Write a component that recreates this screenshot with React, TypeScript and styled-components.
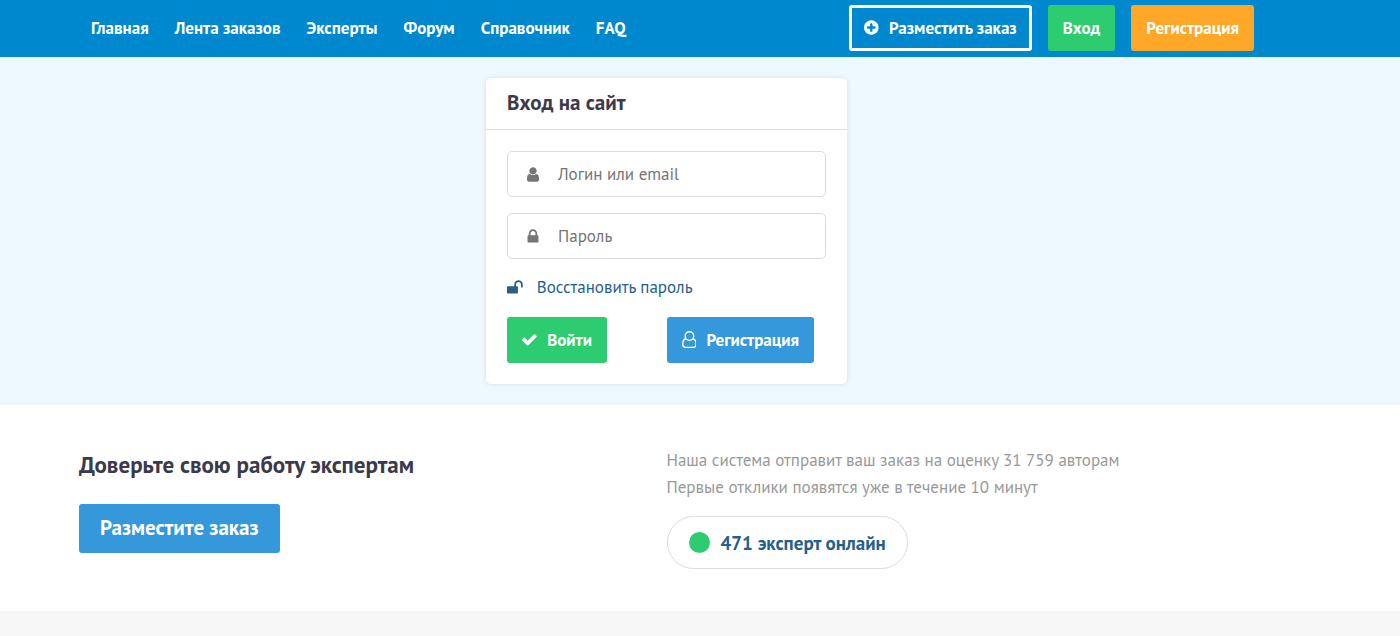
import React from "react";
import styled, { createGlobalStyle, css } from "styled-components";

const GlobalStyle = createGlobalStyle`
  *, *::before, *::after { box-sizing: border-box; }
  body {
    margin: 0;
    min-height: 100vh;
    background: #f7f7f7;
    color: #3a3a4a;
    font-family: "PT Sans", Lato, "Noto Sans", sans-serif;
    font-size: 17px;
    line-height: 24px;
  }
  h1, h2, p { margin: 0; }
  button, input { font: inherit; }
`;

/* Page bands share one centred column */
const Container = styled.div`
  width: 100%;
  max-width: 1175px;
  margin: 0 auto;
`;

const band = css`
  padding-left: 16px;
  padding-right: 83px;
`;

const Header = styled.header`
  ${band}
  background: #0088ce;
`;

const HeaderBar = styled(Container)`
  display: flex;
  flex-wrap: wrap;
  align-items: center;
  justify-content: space-between;
  min-height: 57px;
  padding-left: 12px;
  padding-bottom: 1px;
`;

const Nav = styled.nav`
  display: flex;
  flex-wrap: wrap;
  gap: 26px;
`;

const NavLink = styled.a`
  color: #fff;
  font-weight: 700;
  text-decoration: none;
`;

const Actions = styled.div`
  display: flex;
  gap: 16px;
`;

type Tone = "green" | "orange" | "blue" | "outline";
const tones: Record<Tone, string> = {
  green: "#2ecc71",
  orange: "#ffa726",
  blue: "#3498db",
  outline: "transparent",
};

const Button = styled.button<{ $tone: Tone; $large?: boolean }>`
  display: inline-flex;
  align-items: center;
  gap: 10px;
  height: ${({ $large }) => ($large ? 49 : 46)}px;
  padding: 0 ${({ $large }) => ($large ? 18 : 12)}px 1px;
  border: 3px solid ${({ $tone }) => ($tone === "outline" ? "#fff" : tones[$tone])};
  border-radius: 3px;
  background: ${({ $tone }) => tones[$tone]};
  color: #fff;
  font-size: ${({ $large }) => ($large ? 21 : 17)}px;
  font-weight: 700;
  white-space: nowrap;
  cursor: pointer;
`;

const Hero = styled.main`
  ${band}
  padding-top: 21px;
  padding-bottom: 21px;
  background: #eef9ff;
`;

const Card = styled.section`
  width: 100%;
  max-width: 361px;
  margin: 0 auto;
  border-radius: 5px;
  background: #fff;
  box-shadow: 0 0 5px rgba(0, 60, 90, 0.12);
`;

const CardTitle = styled.h1`
  padding: 12px 21px 13px;
  border-bottom: 1px solid #dde1e5;
  font-size: 21px;
  line-height: 26px;
`;

const Form = styled.form`
  display: flex;
  flex-direction: column;
  gap: 16px;
  padding: 21px;
`;

const Field = styled.label`
  display: flex;
  align-items: center;
  height: 46px;
  padding-left: 16px;
  border: 1px solid #dcdcdc;
  border-radius: 5px;
  color: #757575;
`;

const Input = styled.input`
  flex: 1;
  min-width: 0;
  height: 100%;
  padding: 0 16px;
  border: 0;
  outline: 0;
  background: transparent;
  color: #3a3a4a;
  &::placeholder { color: #757575; opacity: 1; }
`;

const RestoreLink = styled.a`
  display: flex;
  align-items: center;
  gap: 14px;
  padding-bottom: 2px;
  color: #265f8c;
  text-decoration: none;
`;

const FormActions = styled.div`
  display: grid;
  grid-template-columns: 1fr 1fr;
  justify-items: start;
`;

const Promo = styled.section`
  ${band}
  padding-top: 42px;
  padding-bottom: 42px;
  background: #fff;
`;

const PromoGrid = styled(Container)`
  display: grid;
  grid-template-columns: 1fr 1fr;
`;

const PromoTitle = styled.h2`
  padding: 2px 0 23px;
  font-size: 23px;
  line-height: 32px;
`;

const PromoText = styled.p`
  color: #999;
  line-height: 27px;
`;

const OnlineBadge = styled.a`
  display: inline-flex;
  align-items: center;
  gap: 11px;
  height: 53px;
  margin-top: 15px;
  padding: 0 21px;
  border: 1px solid #dcdcdc;
  border-radius: 27px;
  color: #265f8c;
  font-size: 19px;
  font-weight: 700;
  text-decoration: none;
  vertical-align: top;
`;

const OnlineDot = styled.span`
  width: 21px;
  height: 21px;
  border-radius: 50%;
  background: #2ecc71;
`;

const Svg = styled.svg<{ $boxed?: boolean }>`
  flex: none;
  width: ${({ $boxed }) => ($boxed ? "18px" : "auto")};
  height: 17px;
  fill: currentColor;
`;

/* Glyph outlines with the horizontal extent each one occupies */
const icons = {
  plus: { x: 128, w: 1536, d: "M1344 960v-128q0-26-19-45t-45-19h-256v-256q0-26-19-45t-45-19h-128q-26 0-45 19t-19 45v256h-256q-26 0-45 19t-19 45v128q0 26 19 45t45 19h256v256q0 26 19 45t45 19h128q26 0 45-19t19-45v-256h256q26 0 45-19t19-45zm320-64q0 209-103 385.5t-279.5 279.5-385.5 103-385.5-103-279.5-279.5-103-385.5 103-385.5 279.5-279.5 385.5-103 385.5 103 279.5 279.5 103 385.5z" },
  user: { x: 256, w: 1280, d: "M1536 1399q0 109-62.5 187t-150.5 78h-854q-88 0-150.5-78t-62.5-187q0-85 8.5-160.5t31.5-152 58.5-131 94-89 134.5-34.5q131 128 313 128t313-128q76 0 134.5 34.5t94 89 58.5 131 31.5 152 8.5 160.5zm-256-887q0 159-112.5 271.5t-271.5 112.5-271.5-112.5-112.5-271.5 112.5-271.5 271.5-112.5 271.5 112.5 112.5 271.5z" },
  lock: { x: 320, w: 1152, d: "M640 768h512v-192q0-106-75-181t-181-75-181 75-75 181v192zm832 96v576q0 40-28 68t-68 28h-960q-40 0-68-28t-28-68v-576q0-40 28-68t68-28h32v-192q0-184 132-316t316-132 316 132 132 316v192h32q40 0 68 28t28 68z" },
  unlock: { x: 64, w: 1664, d: "M1728 576v256q0 26-19 45t-45 19h-64q-26 0-45-19t-19-45v-256q0-106-75-181t-181-75-181 75-75 181v192h96q40 0 68 28t28 68v576q0 40-28 68t-68 28h-960q-40 0-68-28t-28-68v-576q0-40 28-68t68-28h672v-192q0-185 131.5-316.5t316.5-131.5 316.5 131.5 131.5 316.5z" },
  check: { x: 121, w: 1600, d: "M1671 566q0 40-28 68l-724 724-136 136q-28 28-68 28t-68-28l-136-136-362-362q-28-28-28-68t28-68l136-136q28-28 68-28t68 28l294 295 656-657q28-28 68-28t68 28l136 136q28 28 28 68z" },
};

function Icon({ name, boxed }: { name: keyof typeof icons; boxed?: boolean }) {
  const { x, w, d } = icons[name];
  return (
    <Svg $boxed={boxed} viewBox={`${x} 0 ${w} 1792`} aria-hidden="true">
      <path d={d} />
    </Svg>
  );
}

function UserOutline() {
  return (
    <Svg viewBox="1.2 0.2 15.6 17.8" aria-hidden="true">
      <g fill="none" stroke="currentColor" strokeWidth="1.4">
        <circle cx="9" cy="5.5" r="4.5" />
        <path d="M5.4 8.300C2.900 8.700 2 11 2 14.100c0 1.900 1.200 3.200 2.900 3.200h8.200c1.700 0 2.900-1.300 2.900-3.200 0-3.100-.9-5.400-3.400-5.800" />
      </g>
    </Svg>
  );
}

const navItems = ["Главная", "Лента заказов", "Эксперты", "Форум", "Справочник", "FAQ"];

export default function App() {
  return (
    <>
      <GlobalStyle />
      <Header>
        <HeaderBar>
          <Nav>
            {navItems.map((item) => (
              <NavLink key={item} href="#">{item}</NavLink>
            ))}
          </Nav>
          <Actions>
            <Button $tone="outline" type="button"><Icon name="plus" />Разместить заказ</Button>
            <Button $tone="green" type="button">Вход</Button>
            <Button $tone="orange" type="button">Регистрация</Button>
          </Actions>
        </HeaderBar>
      </Header>
      <Hero>
        <Card>
          <CardTitle>Вход на сайт</CardTitle>
          <Form onSubmit={(e) => e.preventDefault()}>
            <Field>
              <Icon name="user" boxed />
              <Input type="text" placeholder="Логин или email" aria-label="Логин или email" />
            </Field>
            <Field>
              <Icon name="lock" boxed />
              <Input type="password" placeholder="Пароль" aria-label="Пароль" />
            </Field>
            <RestoreLink href="#"><Icon name="unlock" />Восстановить пароль</RestoreLink>
            <FormActions>
              <Button $tone="green" type="submit"><Icon name="check" />Войти</Button>
              <Button $tone="blue" type="button"><UserOutline />Регистрация</Button>
            </FormActions>
          </Form>
        </Card>
      </Hero>
      <Promo>
        <PromoGrid>
          <div>
            <PromoTitle>Доверьте свою работу экспертам</PromoTitle>
            <Button $tone="blue" $large type="button">Разместите заказ</Button>
          </div>
          <div>
            <PromoText>Наша система отправит ваш заказ на оценку 31 759 авторам</PromoText>
            <PromoText>Первые отклики появятся уже в течение 10 минут</PromoText>
            <OnlineBadge href="#"><OnlineDot />471 эксперт онлайн</OnlineBadge>
          </div>
        </PromoGrid>
      </Promo>
    </>
  );
}
